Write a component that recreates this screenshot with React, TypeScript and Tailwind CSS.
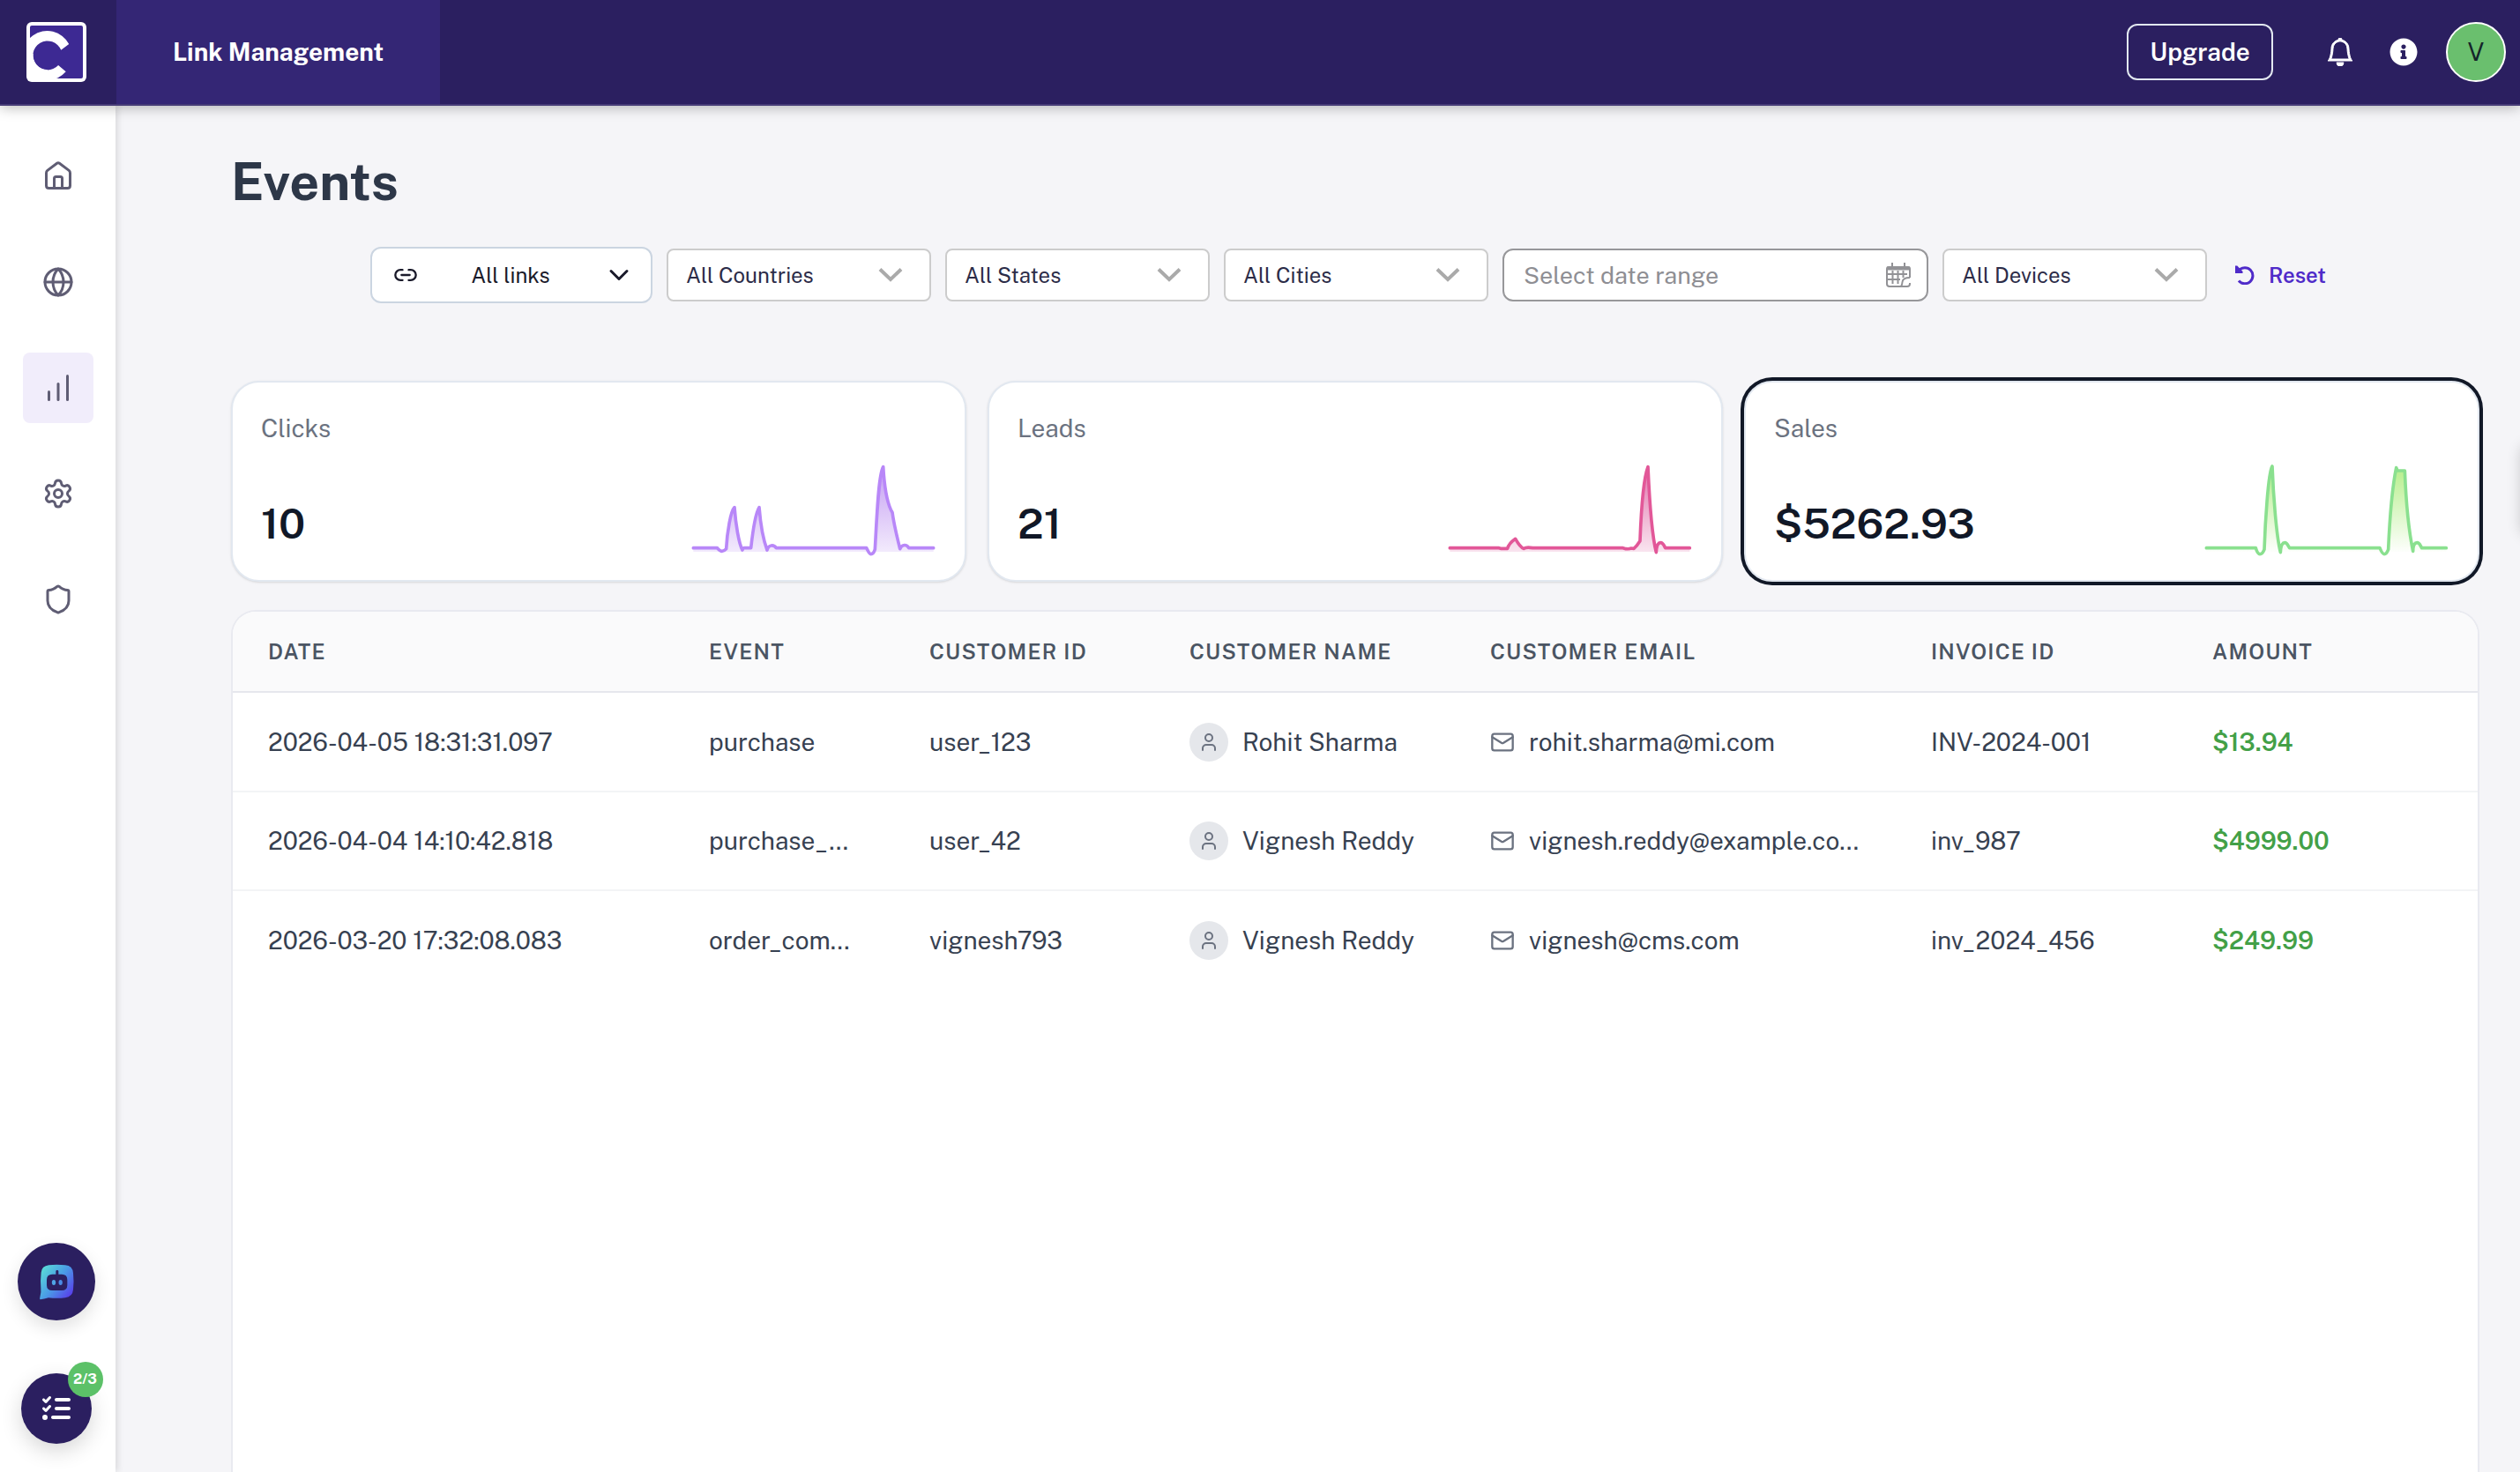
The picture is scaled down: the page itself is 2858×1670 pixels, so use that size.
import React from "react";
import {
  ChartNoAxesColumnIncreasing,
  ChevronDown,
  Globe,
  Link2,
  Mail,
  Settings,
  Shield,
  User,
} from "lucide-react";
import { BsBell } from "react-icons/bs";
import { FaInfoCircle } from "react-icons/fa";
import { FaListCheck } from "react-icons/fa6";

function Logo() {
  return (
    <svg viewBox="0 0 68 68" className="size-[68px]" aria-hidden="true">
      <defs>
        <clipPath id="logo-clip">
          <rect x="1" y="1" width="66" height="66" rx="5" />
        </clipPath>
      </defs>
      <rect width="68" height="68" rx="6" fill="#fff" />
      <rect x="4" y="4" width="60" height="60" rx="2" fill="#3d2993" />
      <g fill="#fff" clipPath="url(#logo-clip)">
        <path d="M48.2 25A28 28 0 1 0 44.7 56.3L36.1 49A16.5 16.5 0 1 1 39.2 31.7Z" />
        <path d="M2 36H7.6A16.5 16.5 0 0 0 24 54.2L26 66H2Z" />
      </g>
    </svg>
  );
}

function HomeIcon() {
  return (
    <svg viewBox="0 1 36 36" className="size-9" fill="none" stroke="currentColor" strokeWidth="3" strokeLinejoin="round" strokeLinecap="round" aria-hidden="true">
      <path d="M4.5 15.2Q4.5 13.5 5.8 12.4L16.6 4.2Q18 3.2 19.4 4.2L30.2 12.4Q31.5 13.5 31.5 15.2V29.5Q31.5 32.5 28.5 32.5H7.5Q4.5 32.5 4.5 29.5Z" />
      <path d="M13.5 32V21.5Q13.5 19.5 15.500 19.500H20.500Q22.500 19.500 22.500 21.500V32" />
    </svg>
  );
}

function BotIcon() {
  return (
    <svg viewBox="132 159 120 123" className="h-[41px] w-10" aria-hidden="true">
      <defs>
        <linearGradient id="bot" x1="0" y1="0.1" x2="1" y2="0.9">
          <stop offset="0" stopColor="#5be0d6" />
          <stop offset="0.5" stopColor="#4a9be6" />
          <stop offset="1" stopColor="#5a34ea" />
        </linearGradient>
      </defs>
      <path fill="url(#bot)" d="M166 163Q193 160 222 163Q247 165 249 190Q252 218 249 246Q247 271 222 274Q195 277 165 274Q150 279 137 280Q134 278 136 272Q141 256 139 240Q137 215 140 188Q142 166 166 163Z" />
      <path fill="#2b1f60" d="M190 184Q190 180 194.500 180Q199 180 199 184V194H210Q229 194 229 213V231Q229 249 210 249H178Q159 249 159 231V213Q159 194 178 194H190Z" />
      <ellipse cx="183" cy="222" rx="6.500" ry="9" fill="#4fa5e6" />
      <ellipse cx="206" cy="222" rx="6.500" ry="9" fill="#4a8be6" />
    </svg>
  );
}

function CalendarIcon() {
  return (
    <svg viewBox="0 0 28 28" className="size-7" fill="none" stroke="#929296" strokeWidth="2" aria-hidden="true">
      <path d="M7 0V5M21 0V5" />
      <path d="M16 27H4Q1 27 1 24V7Q1 5 3 5H25Q27 5 27 7V17" />
      <path d="M1 6.500H27" strokeWidth="4" />
      <path d="M2 13H24M2 19H16M7.500 9V24M13.500 9V24M19.500 9V17" />
      <path d="M27 17Q19 17 18.500 22Q18 27 16 27H24Q27 27 27 24V23" />
    </svg>
  );
}

function ResetIcon() {
  return (
    <svg viewBox="0 0 22 22" className="size-[22px]" aria-hidden="true">
      <path d="M4.500 5.500A9 9 0 1 1 4 17.500" fill="none" stroke="#4f2bc9" strokeWidth="3" />
      <path d="M0 0.500H2.300L8.500 7V9H0Z" fill="#4f2bc9" />
    </svg>
  );
}

const navItems = [
  { label: "Home", icon: <HomeIcon /> },
  { label: "Domains", icon: <Globe size={36} /> },
  { label: "Analytics", icon: <ChartNoAxesColumnIncreasing size={36} />, active: true },
  { label: "Settings", icon: <Settings size={36} /> },
  { label: "Security", icon: <Shield size={36} /> },
];

function FilterSelect({ label }: { label: string }) {
  return (
    <div className="relative w-[300px]">
      <select
        aria-label={label}
        className="h-[60px] w-full appearance-none rounded-lg border-2 border-[#cccccc] bg-white pr-16 pl-5 text-2xl text-[#2c2c48]"
      >
        <option>{label}</option>
      </select>
      <svg viewBox="0 0 28 16" className="pointer-events-none absolute top-[22px] right-8 h-4 w-7" fill="none" stroke="#aaa" strokeWidth="4" aria-hidden="true">
        <path d="M2 1.500L14 13L26 1.500" />
      </svg>
    </div>
  );
}

type Stat = {
  label: string;
  value: string;
  id: string;
  stroke: string;
  fill: string;
  viewBox: string;
  line: string;
  area: string;
  top: number;
  bottom: number;
  selected?: boolean;
};

const stats: Stat[] = [
  {
    label: "Clicks",
    value: "10",
    id: "clicks",
    stroke: "#b887f8",
    fill: "#b98cf0",
    viewBox: "126 306 840 312",
    top: 0.85,
    bottom: 0.16,
    line: "M139 605H220C226 611 230 616 236 616S246 614 251 608C254 550 266 480 279 467C283 525 294 590 306 612Q307 605 313 605H335C341 550 349 490 363 467C368 530 378 580 390 612C395 593 413 593 421 605H728C734 617 738 626 743 626S754 620 757 610C763 510 768 360 785 329C789 400 797 445 811 475L816 484C822 530 833 570 842 608C849 592 865 592 872 605H956",
    area: "V618H139Z",
  },
  {
    label: "Leads",
    value: "21",
    id: "leads",
    stroke: "#e25798",
    fill: "#dc5c9e",
    viewBox: "120 306 840 312",
    top: 0.85,
    bottom: 0.16,
    line: "M133 605H300L306 607H329C333 593 343 583 356 574C364 588 372 602 384 607C392 602 400 602 415 605H722L732 608Q745 609 749 606L759 607C766 601 773 592 780 581C783 500 791 370 807 329C811 420 820 560 835 620C836 600 841 587 850 587S863 600 866 605H949",
    area: "V618H133Z",
  },
  {
    label: "Sales",
    value: "$5262.93",
    id: "sales",
    stroke: "#8ae08f",
    fill: "#b6ee8a",
    viewBox: "174 306 840 312",
    top: 1,
    bottom: 0,
    line: "M187 605H355C359 618 363 626 369 626S380 620 384 610C387 520 397 350 411 327C414 410 424 560 439 620C440 598 446 587 454 587S465 598 470 605H777C782 617 786 626 792 626S803 618 806 610C810 520 819 400 833 332L837 342H862C865 420 872 530 890 616C890 597 896 587 904 587S915 597 920 605H1003",
    area: "V618H187Z",
    selected: true,
  },
];

function StatCard({ s }: { s: Stat }) {
  return (
    <section
      className={
        s.selected
          ? "flex h-[228px] flex-col rounded-[32px] border-2 border-[#e2e8f0] bg-white p-8 ring-4 ring-[#111827]"
          : "flex h-[228px] flex-col rounded-[32px] border-2 border-[#e2e8f0] bg-white p-8 shadow-sm"
      }
    >
      <h2 className="text-[28px] leading-10 text-[#6b7280]">{s.label}</h2>
      <div className="flex flex-1 items-end justify-between">
        <p className="text-5xl leading-[64px] font-semibold text-[#111827]">{s.value}</p>
        <svg viewBox={s.viewBox} className="h-[104px] w-[280px] overflow-visible" aria-hidden="true">
          <defs>
            <linearGradient id={s.id} x1="0" y1="0" x2="0" y2="1">
              <stop offset="0" stopColor={s.fill} stopOpacity={s.top} />
              <stop offset="1" stopColor={s.fill} stopOpacity={s.bottom} />
            </linearGradient>
            <clipPath id={s.id + "-clip"}>
              <rect x="126" y="306" width="900" height="312" />
            </clipPath>
          </defs>
          <path d={s.line + s.area} fill={"url(#" + s.id + ")"} clipPath={"url(#" + s.id + "-clip)"} />
          <path d={s.line} fill="none" stroke={s.stroke} strokeWidth="11" strokeLinecap="round" strokeLinejoin="round" />
        </svg>
      </div>
    </section>
  );
}

const columns = [
  { label: "Date", width: "w-[500px]" },
  { label: "Event", width: "w-[250px]" },
  { label: "Customer ID", width: "w-[295px]" },
  { label: "Customer Name", width: "w-[341px]" },
  { label: "Customer Email", width: "w-[500px]" },
  { label: "Invoice ID", width: "w-[319px]" },
  { label: "Amount", width: "w-[341px]" },
];

const rows = [
  ["2026-04-05 18:31:31.097", "purchase", "user_123", "Rohit Sharma", "rohit.sharma@mi.com", "INV-2024-001", "$13.94"],
  ["2026-04-04 14:10:42.818", "purchase_...", "user_42", "Vignesh Reddy", "vignesh.reddy@example.co...", "inv_987", "$4999.00"],
  ["2026-03-20 17:32:08.083", "order_com...", "vignesh793", "Vignesh Reddy", "vignesh@cms.com", "inv_2024_456", "$249.99"],
];

export default function App() {
  return (
    <div className="flex h-screen flex-col overflow-hidden bg-[#f5f5f8] font-['Public_Sans','Inter',sans-serif]">
      <header className="relative z-20 flex h-[120px] shrink-0 items-center border-b-2 border-[#463b76] bg-[#2b1f60] text-white shadow-[0_2px_14px_rgba(0,0,0,0.28)]">
        <a href="#" aria-label="Dashboard" className="flex w-[132px] shrink-0 justify-center pr-1">
          <Logo />
        </a>
        <a href="#links" className="flex h-full w-[367px] items-center justify-center bg-[#342675] text-[28px] font-bold">
          Link Management
        </a>
        <div className="ml-auto flex items-center pr-4">
          <button className="h-16 w-[166px] rounded-xl border-2 border-[#e2e8f0] text-[28px] font-semibold">Upgrade</button>
          <button aria-label="Notifications" className="ml-[60px]">
            <BsBell size={32} className="stroke-white stroke-[0.5]" />
          </button>
          <button aria-label="Information" className="ml-10">
            <FaInfoCircle size={32} />
          </button>
          <button aria-label="Account" className="ml-8 size-[68px] rounded-full border-2 border-white bg-[#6abf6e] text-[28px] text-[#14242a]">
            V
          </button>
        </div>
      </header>

      <div className="flex min-h-0 flex-1">
        <aside className="z-10 flex w-[131px] shrink-0 flex-col items-center justify-between bg-white pt-10 pb-8 shadow-[2px_0_8px_rgba(0,0,0,0.12)]">
          <nav aria-label="Main" className="flex flex-col gap-10">
            {navItems.map((n) => (
              <a
                key={n.label}
                href="#"
                aria-label={n.label}
                className={
                  n.active
                    ? "flex size-20 items-center justify-center rounded-lg bg-[#f1edfb] text-[#5f5d74]"
                    : "flex size-20 items-center justify-center rounded-lg text-[#5f5d74]"
                }
              >
                {n.icon}
              </a>
            ))}
          </nav>
          <div className="flex flex-col items-center gap-[60px] pr-1">
            <button aria-label="Chat assistant" className="flex size-[88px] items-center justify-center rounded-full bg-[#2b1f60] shadow-[0_8px_20px_rgba(0,0,0,0.12)]">
              <BotIcon />
            </button>
            <button aria-label="Setup checklist" className="relative flex size-20 items-center justify-center rounded-full bg-[#2b1f60] text-white shadow-[0_8px_24px_rgba(0,0,0,0.16)]">
              <FaListCheck size={32} />
              <span className="absolute -top-[13px] -right-[13px] flex size-10 items-center justify-center rounded-full bg-[#5cc168] text-base font-bold">
                2/3
              </span>
            </button>
          </div>
        </aside>

        <main className="flex min-w-0 flex-1 flex-col pt-[50px] pr-[46px] pl-[131px]">
          <h1 className="text-[59px] leading-[72px] font-bold text-[#2d3748]">Events</h1>

          <div className="mt-[38px] flex items-center justify-center gap-4">
            <button aria-haspopup="listbox" className="flex h-16 w-80 items-center justify-between rounded-xl border-2 border-[#cbd5e1] bg-white pr-[18px] pl-6 text-2xl text-[#1a1a2a]">
              <Link2 size={28} />
              All links
              <ChevronDown size={36} />
            </button>
            <FilterSelect label="All Countries" />
            <FilterSelect label="All States" />
            <FilterSelect label="All Cities" />
            <div className="relative w-[483px]">
              <input
                aria-label="Date range"
                placeholder="Select date range"
                className="h-[60px] w-full rounded-xl border-2 border-[#97979a] bg-white pr-16 pl-[22px] text-[27px] placeholder:text-[#8e8e93]"
              />
              <span className="pointer-events-none absolute top-4 right-5">
                <CalendarIcon />
              </span>
            </div>
            <FilterSelect label="All Devices" />
            <button className="flex h-16 items-center gap-4 px-4 text-2xl font-semibold text-[#4f2bc9]">
              <ResetIcon />
              Reset
            </button>
          </div>

          <div className="mt-[88px] grid grid-cols-3 gap-6">
            {stats.map((s) => (
              <StatCard key={s.id} s={s} />
            ))}
          </div>

          <div className="mt-8 min-h-0 flex-1 overflow-hidden rounded-t-[28px] border-2 border-b-0 border-[#e9eaf0] bg-white">
            <table className="w-full table-fixed text-left">
              <thead className="bg-[#fafafb]">
                <tr className="h-[91px] border-b-2 border-[#e6e7ed]">
                  {columns.map((c) => (
                    <th key={c.label} scope="col" className={c.width + " px-10 text-2xl font-semibold tracking-wider text-[#4b5563] uppercase"}>
                      {c.label}
                    </th>
                  ))}
                </tr>
              </thead>
              <tbody className="text-[28px] text-[#374151]">
                {rows.map(([date, event, id, name, email, invoice, amount]) => (
                  <tr key={date} className="h-28 border-b-2 border-[#f3f4f6] first:h-[113px] last:border-b-0">
                    <td className="px-10 whitespace-nowrap">{date}</td>
                    <td className="pl-10 whitespace-nowrap">{event}</td>
                    <td className="px-10">{id}</td>
                    <td className="pl-10">
                      <div className="flex items-center gap-4 whitespace-nowrap">
                        <span className="flex size-11 items-center justify-center rounded-full bg-[#e5e7eb] text-[#6b7280]">
                          <User size={24} />
                        </span>
                        {name}
                      </div>
                    </td>
                    <td className="pl-10">
                      <div className="flex items-center gap-4 whitespace-nowrap">
                        <Mail size={28} className="shrink-0 text-[#6b7280]" />
                        {email}
                      </div>
                    </td>
                    <td className="px-10 whitespace-nowrap">{invoice}</td>
                    <td className="px-10 font-semibold text-[#43a047]">{amount}</td>
                  </tr>
                ))}
              </tbody>
            </table>
          </div>
        </main>
      </div>
      <div className="fixed top-[500px] left-full h-[104px] w-20 rounded-l-xl bg-white shadow-[0_4px_16px_rgba(0,0,0,0.16)]" aria-hidden="true" />
    </div>
  );
}
